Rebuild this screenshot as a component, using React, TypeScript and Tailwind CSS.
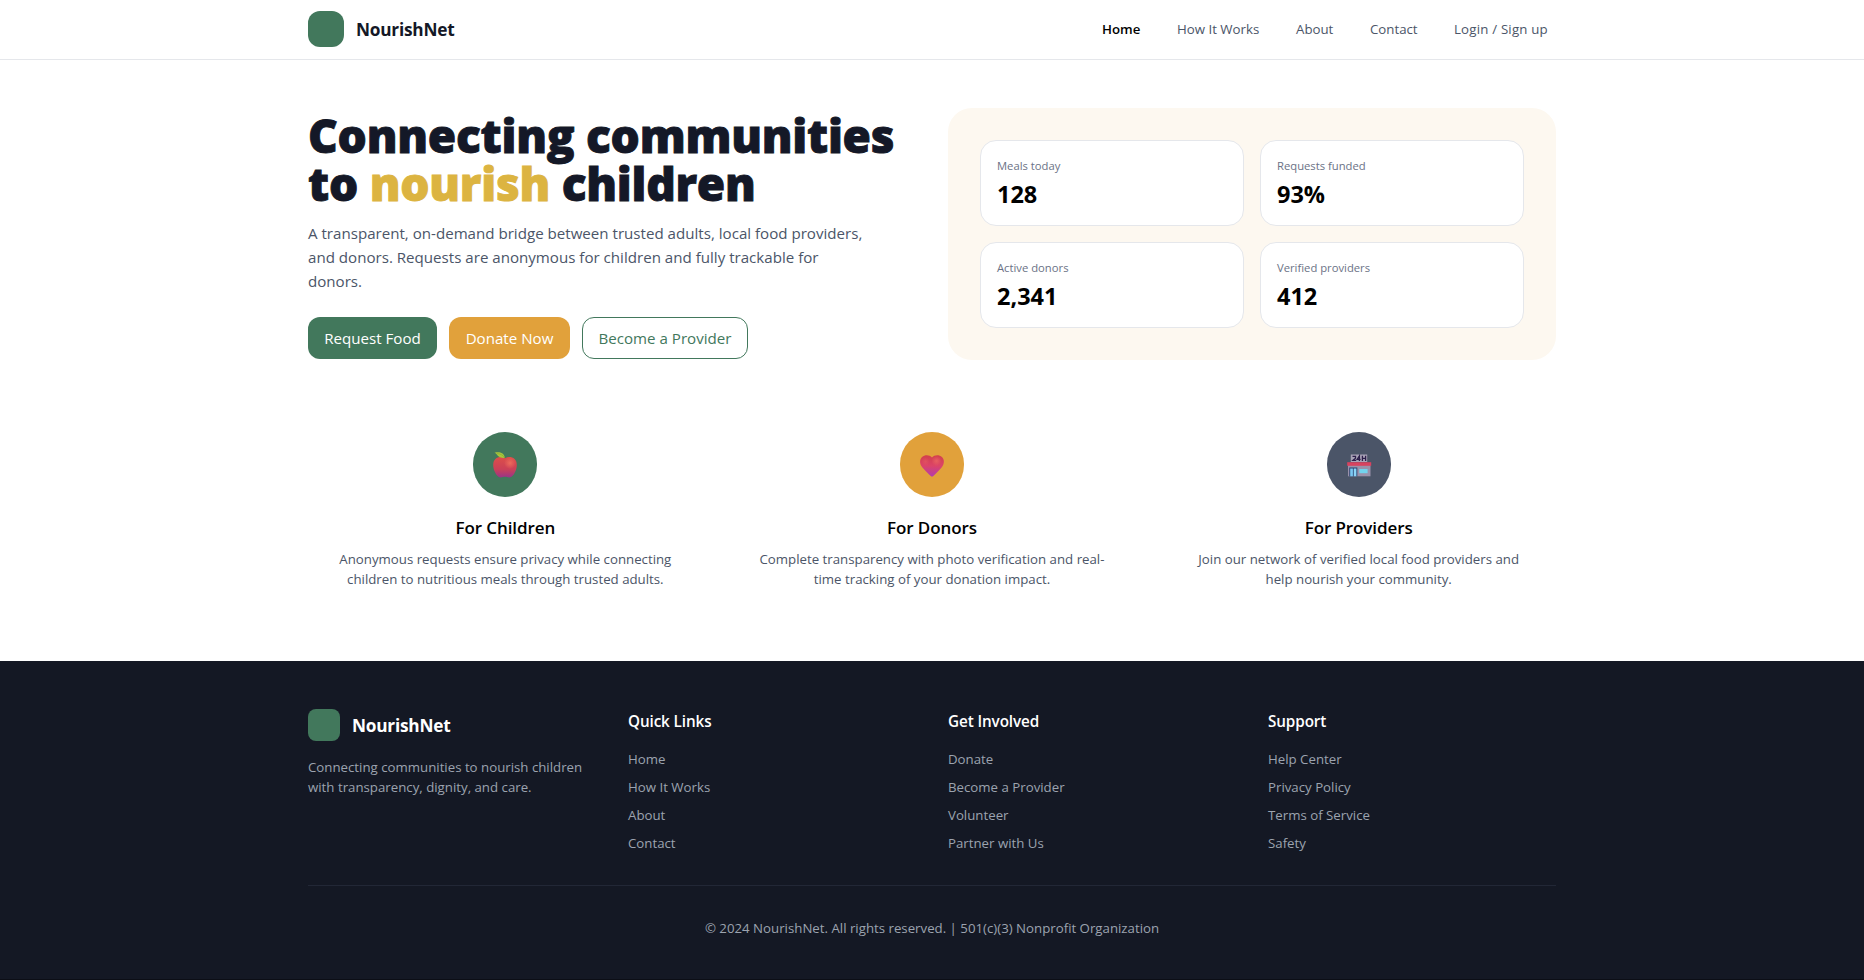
import React from "react";

/* A label that never wraps. */
function T({ t, c = "" }: { t: string; c?: string }) {
  return <span className={`whitespace-nowrap ${c}`}>{t}</span>;
}

const nav = [
  { t: "Home", c: "font-semibold text-black w-[39px]" },
  { t: "How It Works", c: "text-[#4b5568] w-[83px]" },
  { t: "About", c: "text-[#4b5568] w-[38px]" },
  { t: "Contact", c: "text-[#4b5568] w-[48px]" },
  { t: "Login / Sign up", c: "text-[#4b5568] w-[94px] tracking-[0.2px]" },
];

const stats = [
  ["Meals today", "128"],
  ["Requests funded", "93%"],
  ["Active donors", "2,341"],
  ["Verified providers", "412"],
];

function Apple() {
  return (
    <svg width="26" height="28" viewBox="0 0 26 28">
      <defs>
        <linearGradient id="apple" x1="0" y1="0" x2="0" y2="1">
          <stop offset="0" stopColor="#dc4f49" />
          <stop offset="0.6" stopColor="#cb4058" />
          <stop offset="1" stopColor="#9a3488" />
        </linearGradient>
        <radialGradient id="appleGlow" cx="0.5" cy="0.5" r="0.5">
          <stop offset="0" stopColor="#ec6a5c" />
          <stop offset="1" stopColor="#ec6a5c" stopOpacity="0" />
        </radialGradient>
      </defs>
      <path
        d="M13 6.2C16 4.6 20 4.7 22.6 7C25.5 9.7 25.3 15 23.3 19.5C22 22.5 20 25.4 17.2 25.4C15.5 25.4 14.5 24.8 13 24.8C11.5 24.8 10.5 25.4 8.8 25.4C6 25.4 4 22.5 2.7 19.5C.7 15 .5 9.7 3.4 7C6 4.7 10 4.6 13 6.2Z"
        fill="url(#apple)"
      />
      <ellipse cx="18" cy="11" rx="6" ry="6" fill="url(#appleGlow)" />
      <path d="M2.5 .7C7 -.4 12.2 .3 12.8 5.8C8 6.3 6 4.5 5 2.8C4.4 1.7 3.5 1.1 2.5 .7Z" fill="#a8c63c" />
      <path d="M5 1.6C8 1.7 11 3 12.6 5.6" fill="none" stroke="#7fa32f" strokeWidth="0.5" />
    </svg>
  );
}

function Heart() {
  return (
    <svg width="26" height="24" viewBox="0 0 26 24">
      <defs>
        <linearGradient id="heart" x1="0" y1="0" x2="0" y2="1">
          <stop offset="0" stopColor="#d2404c" />
          <stop offset="0.5" stopColor="#dc4468" />
          <stop offset="1" stopColor="#b33aae" />
        </linearGradient>
        <radialGradient id="heartGlow" cx="0.5" cy="0.5" r="0.5">
          <stop offset="0" stopColor="#e85f62" />
          <stop offset="1" stopColor="#e85f62" stopOpacity="0" />
        </radialGradient>
      </defs>
      <path
        d="M13 3.6C15.4 .6 20.3 .6 22.9 3C25.7 5.6 25.4 10 22.8 13.3C20.3 16.5 17 19.5 14.3 21.9C13.5 22.6 12.5 22.6 11.7 21.9C9 19.5 5.7 16.5 3.2 13.3C.6 10 .3 5.6 3.1 3C5.7 .6 10.6 .6 13 3.6Z"
        fill="url(#heart)"
      />
      <ellipse cx="17.5" cy="7" rx="5" ry="5" fill="url(#heartGlow)" />
      <ellipse cx="6.5" cy="7.5" rx="4" ry="4.5" fill="url(#heartGlow)" opacity="0.5" />
    </svg>
  );
}

function Store() {
  return (
    <svg width="26" height="24" viewBox="0 0 26 24">
      <rect x="4.800" y="0.500" width="16.400" height="7.500" fill="#a8a2b6" />
      <g fill="none" stroke="#2c1f4a" strokeWidth="1.300">
        <path d="M6.500 2.300H9.500V4.300L7 6.300H10.200" />
        <path d="M13.400 6.900V1.900L11.200 5.300H14.600" />
        <path d="M16.400 1.800V6.900M19.600 1.800V6.900M16.400 4.300H19.600" />
      </g>
      <rect x="2" y="11" width="22.500" height="11.300" fill="#9a91aa" />
      <rect x="1.200" y="8.200" width="24" height="3.600" fill="#d8425f" />
      <rect x="3.300" y="13.500" width="8" height="8.800" fill="#27406e" />
      <rect x="4.200" y="14.500" width="2.700" height="7.800" fill="#7cc8f2" />
      <rect x="7.700" y="14.500" width="2.700" height="7.800" fill="#8bd4f7" />
      <rect x="13.300" y="15" width="8.300" height="4.200" fill="#72d3ee" />
    </svg>
  );
}

const features = [
  {
    icon: <Apple />,
    bg: "bg-[#42785c]",
    title: "For Children",
    lines: ["Anonymous requests ensure privacy while connecting", "children to nutritious meals through trusted adults."],
  },
  {
    icon: <Heart />,
    bg: "bg-[#e1a13b]",
    title: "For Donors",
    lines: ["Complete transparency with photo verification and real-", "time tracking of your donation impact."],
  },
  {
    icon: <Store />,
    bg: "bg-[#4b5568]",
    title: "For Providers",
    lines: ["Join our network of verified local food providers and", "help nourish your community."],
  },
];

const columns = [
  { h: "Quick Links", links: ["Home", "How It Works", "About", "Contact"] },
  { h: "Get Involved", links: ["Donate", "Become a Provider", "Volunteer", "Partner with Us"] },
  { h: "Support", links: ["Help Center", "Privacy Policy", "Terms of Service", "Safety"] },
];

export default function App() {
  return (
    <div className="flex min-h-[980px] flex-col bg-white font-['Open_Sans','Noto_Sans',sans-serif] text-black">
      <header className="h-[60px] border-b border-[#e5e7eb]">
        <div className="mx-auto flex max-w-7xl items-center justify-between px-4 pt-[11px]">
          <div className="flex items-center gap-3">
            <div className="size-9 rounded-xl bg-[#42785c]" />
            <T t="NourishNet" c="pt-0.5 text-[17.25px] leading-7 font-bold tracking-[-0.23px] text-[#141827]" />
          </div>
          <nav className="flex gap-5 pb-px text-[13.25px] leading-5">
            {nav.map((n) => (
              <a key={n.t} className="px-2">
                <T t={n.t} c={`inline-block ${n.c}`} />
              </a>
            ))}
          </nav>
        </div>
      </header>

      <main className="mx-auto w-full max-w-7xl px-4">
        <section className="grid h-[348px] grid-cols-2 gap-8 py-12">
          <div className="pt-[3px]">
            <h1 className="text-[46px] leading-[48px] font-extrabold tracking-[-0.25px] whitespace-nowrap text-[#141827] [-webkit-text-stroke:0.9px_currentColor]">
              Connecting communities
              <br />
              to <span className="text-[#dcb441]">nourish</span> children
            </h1>
            <p className="mt-[14px] text-[15.125px] leading-6 whitespace-nowrap text-[#4b5568]">
              A transparent, on-demand bridge between trusted adults, local food providers,
              <br />
              and donors. Requests are anonymous for children and fully trackable for
              <br />
              donors.
            </p>
            <div className="mt-6 flex gap-3 text-[15.125px]">
              <button className="h-[42px] w-[129px] rounded-xl bg-[#42785c] whitespace-nowrap text-white">Request Food</button>
              <button className="h-[42px] w-[121px] rounded-xl bg-[#e1a13b] whitespace-nowrap text-white">Donate Now</button>
              <button className="h-[42px] w-[166px] rounded-xl border border-[#42785c] whitespace-nowrap text-[#42785c]">
                Become a Provider
              </button>
            </div>
          </div>
          <div className="grid h-[252px] grid-cols-2 gap-4 rounded-3xl bg-[#fdf8f0] p-8">
            {stats.map(([label, value]) => (
              <div key={label} className="rounded-2xl border border-[#e5e7eb] bg-white px-4 pt-[17px]">
                <div className="text-[11.25px] leading-4 text-[#6b7286]">{label}</div>
                <div className="mt-1 text-[23.5px] leading-8 font-bold">{value}</div>
              </div>
            ))}
          </div>
        </section>

        <section className="grid grid-cols-3 gap-8 pb-12">
          {features.map((f) => (
            <div key={f.title} className="flex flex-col items-center py-6 text-center">
              <div className={`flex h-[65px] w-16 items-center justify-center rounded-full pt-0.5 ${f.bg}`}>{f.icon}</div>
              <h3 className="mt-[17px] text-[17px] leading-7 font-semibold tracking-[-0.1px]">{f.title}</h3>
              <p className="mt-[7px] text-[13.25px] leading-5 text-[#4b5568]">
                {f.lines.map((l) => (
                  <T key={l} t={l} c="block" />
                ))}
              </p>
            </div>
          ))}
        </section>
      </main>

      <footer className="flex-1 border-b border-b-[#0c0e16] bg-[#141824]">
        <div className="mx-auto max-w-7xl px-4 pt-12">
          <div className="grid h-[144px] grid-cols-4 gap-8">
            <div>
              <div className="flex items-center gap-3">
                <div className="size-8 rounded-lg bg-[#42785c]" />
                <T t="NourishNet" c="pt-0.5 text-[17.25px] leading-7 font-bold tracking-[-0.23px] text-white" />
              </div>
              <p className="mt-4 text-[13.25px] leading-5 whitespace-nowrap text-[#9ca3af]">
                Connecting communities to nourish children
                <br />
                with transparency, dignity, and care.
              </p>
            </div>
            {columns.map((c) => (
              <div key={c.h}>
                <h4 className="text-[15.25px] leading-6 font-semibold tracking-[-0.1px] text-white">{c.h}</h4>
                <ul className="mt-4 space-y-2 text-[13.25px] leading-5 text-[#9ca3af]">
                  {c.links.map((l) => (
                    <li key={l}>{l}</li>
                  ))}
                </ul>
              </div>
            ))}
          </div>
          <div className="mt-8 border-t border-[#222736] pt-8 text-center text-[13.25px] leading-5 text-[#9ca3af]">
            © 2024 NourishNet. All rights reserved. | 501(c)(3) Nonprofit Organization
          </div>
        </div>
      </footer>
    </div>
  );
}
